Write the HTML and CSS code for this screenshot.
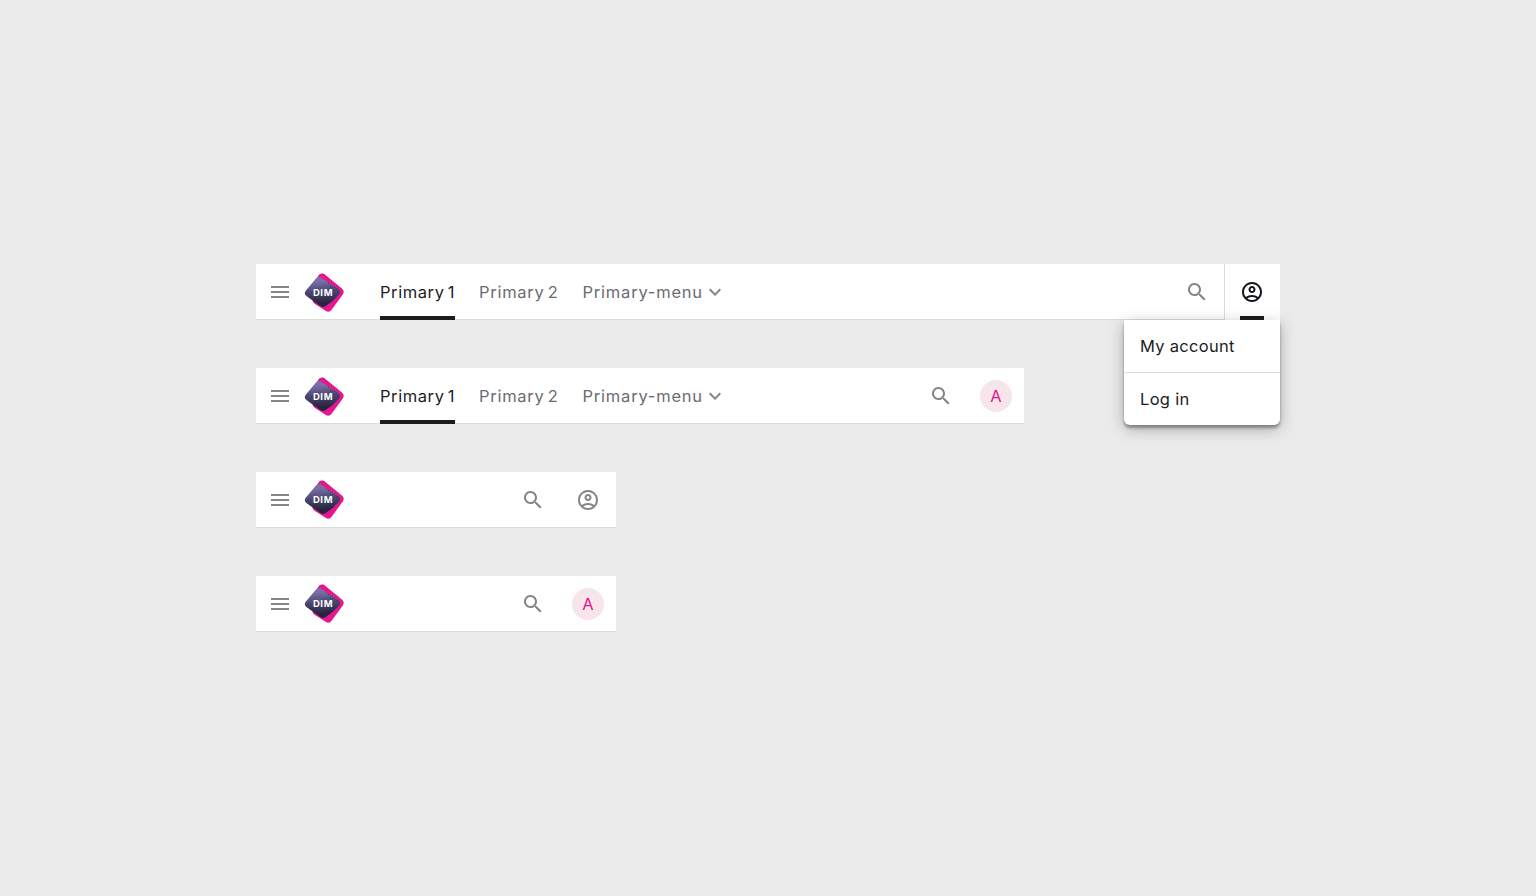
FILE: index.html
```html
<!DOCTYPE html>
<html lang="en">
<head>
  <meta charset="UTF-8">
  <meta name="viewport" content="width=device-width, initial-scale=1.0">
  <title>App bars</title>
  <link rel="stylesheet" href="styles.css">
</head>
<body>
  <svg class="sprites" aria-hidden="true">
    <defs>
      <linearGradient id="logo-fill" x1="0.45" y1="0" x2="0.55" y2="1">
        <stop offset="0" stop-color="#7a6fa6"/>
        <stop offset="0.45" stop-color="#4d4873"/>
        <stop offset="1" stop-color="#25243f"/>
      </linearGradient>
      <pattern id="logo-dots" width="2" height="2" patternUnits="userSpaceOnUse">
        <rect width="1" height="1" fill="#1e1c38"/>
      </pattern>
    </defs>
    <symbol id="i-menu" viewBox="0 0 24 24"><path d="M3 18h18v-2H3v2zm0-5h18v-2H3v2zm0-7v2h18V6H3z"/></symbol>
    <symbol id="i-search" viewBox="0 0 24 24"><path d="M15.5 14h-.79l-.28-.27C15.41 12.59 16 11.11 16 9.5 16 5.91 13.09 3 9.5 3S3 5.91 3 9.5 5.91 16 9.5 16c1.61 0 3.09-.59 4.23-1.57l.27.28v.79l5 4.99L20.49 19l-4.99-5zm-6 0C7.01 14 5 11.99 5 9.5S7.01 5 9.5 5 14 7.01 14 9.5 11.99 14 9.5 14z"/></symbol>
    <symbol id="i-account" viewBox="0 0 24 24"><path d="M12 2C6.48 2 2 6.48 2 12s4.48 10 10 10 10-4.48 10-10S17.52 2 12 2zM7.35 18.5C8.66 17.56 10.26 17 12 17s3.34.56 4.65 1.5C15.34 19.44 13.74 20 12 20s-3.34-.56-4.65-1.5zm10.79-1.38C16.45 15.8 14.32 15 12 15s-4.45.8-6.14 2.12C4.7 15.73 4 13.95 4 12c0-4.42 3.58-8 8-8s8 3.58 8 8c0 1.95-.7 3.73-1.86 5.12z"/><path d="M12 6c-1.93 0-3.5 1.57-3.5 3.5S10.07 13 12 13s3.5-1.57 3.5-3.5S13.93 6 12 6zm0 5c-.83 0-1.5-.67-1.5-1.5S11.17 8 12 8s1.5.67 1.5 1.5S12.83 11 12 11z"/></symbol>
    <symbol id="i-chevron" viewBox="0 0 24 24"><path d="M7.41 8.59 12 13.17l4.59-4.58L18 10l-6 6-6-6z"/></symbol>
    <symbol id="logo-mark" viewBox="0 0 41 40">
      <polygon fill="#e6168f" stroke="#e6168f" stroke-width="9" stroke-linejoin="round" points="18,5 35,19 24,34 13,27"/>
      <polygon fill="url(#logo-fill)" stroke="url(#logo-fill)" stroke-width="8" stroke-linejoin="round" points="15,8 32,19 26,25 19,30 5,20"/>
      <polygon fill="url(#logo-dots)" opacity="0.55" points="22,8 34,17 27,16"/>
      <polygon fill="url(#logo-dots)" opacity="0.55" points="5,24 19,33 12,25"/>
    </symbol>
  </svg>

  <div class="stage">
    <header class="bar">
      <div class="bar-main">
        <span class="cell-menu"><svg class="icon"><use href="#i-menu"/></svg></span>
        <span class="logo"><svg class="logo-mark"><use href="#logo-mark"/></svg><span class="logo-text">DIM</span></span>
        <nav class="tabs">
          <a class="tab active">Primary 1</a>
          <a class="tab">Primary 2</a>
          <a class="tab tab-menu">Primary-menu<svg class="icon"><use href="#i-chevron"/></svg></a>
        </nav>
        <span class="cell"><svg class="icon"><use href="#i-search"/></svg></span>
      </div>
      <span class="cell cell-user open">
        <svg class="icon"><use href="#i-account"/></svg>
      </span>
      <ul class="user-menu">
        <li>My account</li>
        <li>Log in</li>
      </ul>
    </header>

    <header class="bar bar-md">
      <div class="bar-main">
        <span class="cell-menu"><svg class="icon"><use href="#i-menu"/></svg></span>
        <span class="logo"><svg class="logo-mark"><use href="#logo-mark"/></svg><span class="logo-text">DIM</span></span>
        <nav class="tabs">
          <a class="tab active">Primary 1</a>
          <a class="tab">Primary 2</a>
          <a class="tab tab-menu">Primary-menu<svg class="icon"><use href="#i-chevron"/></svg></a>
        </nav>
        <span class="cell"><svg class="icon"><use href="#i-search"/></svg></span>
      </div>
      <span class="cell"><span class="avatar">A</span></span>
    </header>

    <header class="bar bar-sm">
      <div class="bar-main">
        <span class="cell-menu"><svg class="icon"><use href="#i-menu"/></svg></span>
        <span class="logo"><svg class="logo-mark"><use href="#logo-mark"/></svg><span class="logo-text">DIM</span></span>
        <span class="cell"><svg class="icon"><use href="#i-search"/></svg></span>
      </div>
      <span class="cell"><svg class="icon"><use href="#i-account"/></svg></span>
    </header>

    <header class="bar bar-sm">
      <div class="bar-main">
        <span class="cell-menu"><svg class="icon"><use href="#i-menu"/></svg></span>
        <span class="logo"><svg class="logo-mark"><use href="#logo-mark"/></svg><span class="logo-text">DIM</span></span>
        <span class="cell"><svg class="icon"><use href="#i-search"/></svg></span>
      </div>
      <span class="cell"><span class="avatar">A</span></span>
    </header>
  </div>
</body>
</html>
```

FILE: styles.css
```css
* {
  box-sizing: border-box;
}
body {
  margin: 0;
  min-height: 896px;
  background-color: #ebebeb;
  font-family: "Inter", "Liberation Sans", sans-serif;
  font-size: 16.5px;
  color: #1c1c24;
  display: flex;
  align-items: center;
  justify-content: center;
}
.sprites {
  position: absolute;
  width: 0;
  height: 0;
}
.stage {
  width: 1024px;
  display: flex;
  flex-direction: column;
  gap: 48px;
}
.bar {
  position: relative;
  display: flex;
  height: 56px;
  width: 100%;
  background: #fff;
}
.bar-md {
  width: 768px;
}
.bar-sm {
  width: 360px;
}
.bar-main {
  flex: 1;
  display: flex;
  align-items: center;
  height: 56px;
  padding-left: 12px;
  border-bottom: 1px solid #dcdcdc;
}
.bar > .cell {
  border-bottom: 1px solid #dcdcdc;
}
.bar > .cell-user {
  border-bottom: 0;
  box-shadow: inset 1px 0 0 #dcdcdc;
}
.cell-menu {
  display: flex;
  align-items: center;
}
.cell {
  flex: none;
  width: 56px;
  height: 56px;
  display: flex;
  align-items: center;
  justify-content: center;
  position: relative;
}
.bar-main .cell {
  height: 55px;
  margin-left: auto;
  padding-left: 2px;
}
.icon {
  width: 24px;
  height: 24px;
  fill: #858585;
  flex: none;
}
.logo {
  position: relative;
  display: block;
  width: 41px;
  height: 40px;
  margin-left: 12px;
  margin-top: 2px;
  flex: none;
}
.bar-sm .logo {
  margin-top: 0;
}
.logo-mark {
  display: block;
  width: 41px;
  height: 40px;
}
.logo-text {
  position: absolute;
  top: 14px;
  left: 0;
  width: 38px;
  text-align: center;
  font-size: 9.5px;
  line-height: 12px;
  font-weight: 700;
  letter-spacing: 0.6px;
  color: #fff;
}
.tabs {
  display: flex;
  gap: 24px;
  margin-left: 35px;
  height: 56px;
  align-self: flex-start;
}
.tab {
  display: flex;
  align-items: center;
  height: 56px;
  color: #6b6b73;
  letter-spacing: 0.7px;
  word-spacing: -2px;
  white-space: nowrap;
}
.tab-menu {
  letter-spacing: 0.78px;
}
.tab.active {
  color: #1c1c24;
  letter-spacing: 0.58px;
  box-shadow: inset 0 -4px 0 #1c1c1c;
}
.open .icon {
  fill: #14141c;
}
.open::after {
  content: "";
  position: absolute;
  left: 16px;
  bottom: 0;
  width: 24px;
  height: 4px;
  background: #1c1c1c;
}
.avatar {
  width: 32px;
  height: 32px;
  border-radius: 50%;
  background: #f6e6ea;
  color: #e6128c;
  display: flex;
  align-items: center;
  justify-content: center;
}
.user-menu {
  position: absolute;
  top: 56px;
  right: 0;
  width: 156px;
  margin: 0;
  padding: 0;
  list-style: none;
  background: #fff;
  border-radius: 0 0 6px 6px;
  box-shadow: 0 3px 3px rgba(0, 0, 0, 0.32), 0 4px 16px rgba(0, 0, 0, 0.28);
}
.user-menu li {
  height: 52px;
  padding-left: 16px;
  display: flex;
  align-items: center;
  letter-spacing: 0.3px;
}
.user-menu li + li {
  height: 53px;
  border-top: 1px solid #dcdcdc;
}
```
